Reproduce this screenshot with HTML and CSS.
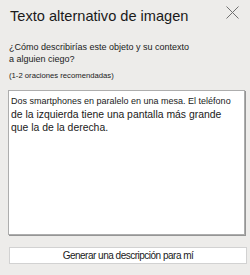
FILE: index.html
```html
<!DOCTYPE html>
<html lang="es">
<head>
    <meta charset="UTF-8">
    <meta name="viewport" content="width=device-width, initial-scale=1.0">
    <title>Texto alternativo</title>
<link rel="stylesheet" href="styles.css">
</head>
<body>
    <main class="panel">
        <div class="header">
            <h3 class="title">Texto alternativo de imagen</h3>
            <button class="close" aria-label="Cerrar">
                <svg width="13" height="13" viewBox="0 0 13 13">
                    <path d="M0.5 0.5 L12.5 12.5 M12.5 0.5 L0.5 12.5" stroke="#707070" stroke-width="1" fill="none"/>
                </svg>
            </button>
        </div>

        <p class="prompt">¿Cómo describirías este objeto y su contexto<br>a alguien ciego?</p>
        <p class="hint">(1-2 oraciones recomendadas)</p>

        <!-- caja de texto con la descripcion -->
        <div class="alt-box">
            <span class="line small">Dos smartphones en paralelo en una mesa. El teléfono</span>
            <span class="line">de la izquierda tiene una pantalla más grande</span>
            <span class="line">que la de la derecha.</span>
        </div>

        <button class="generate">Generar una descripción para mí</button>
    </main>
</body>
</html>
```

FILE: styles.css
```css
*{
    margin: 0;
    box-sizing: border-box;
}
body{
    background-color: #edecea;
    font-family: "Liberation Sans", Arial, sans-serif;
    color: #1a1a1a;
}
.panel{
    width: 250px;
    height: 275px;
    padding-top: 8px;
}
.header{
    display: flex;
    justify-content: space-between;
    align-items: flex-start;
    padding-left: 10px;
    padding-right: 11px;
}
.title{
    font-size: 14.6px;
    font-weight: normal;
    line-height: 17px;
}
.close{
    border: none;
    background: none;
    padding: 0;
    margin-top: -2px;
    width: 13px;
    height: 13px;
    display: flex;
}
.prompt{
    margin: 16px 0 0 9px;
    font-size: 9px;
    line-height: 12px;
}
.hint{
    margin: 6px 0 0 9px;
    font-size: 7.7px;
    line-height: 10px;
}
.alt-box{
    margin: 9px 0 0 8px;
    width: 237px;
    height: 145px;
    background: #fff;
    border: 1px solid #adadad;
    box-shadow: 1px 1px 0 #959595;
    padding: 4px 0 0 2px;
}
.line{
    display: block;
    font-size: 10.4px;
    line-height: 13px;
    white-space: nowrap;
}
.line.small{
    font-size: 9px;
}
.generate{
    display: block;
    margin: 12px 0 0 9px;
    width: 238px;
    height: 17px;
    background: #fff;
    border: 1px solid #d2d2d2;
    border-radius: 0;
    padding: 1px 0 0 0;
    font-family: "Liberation Sans", Arial, sans-serif;
    font-size: 10px;
    letter-spacing: -0.5px;
    line-height: 14px;
    color: #1a1a1a;
    text-align: center;
}
```
